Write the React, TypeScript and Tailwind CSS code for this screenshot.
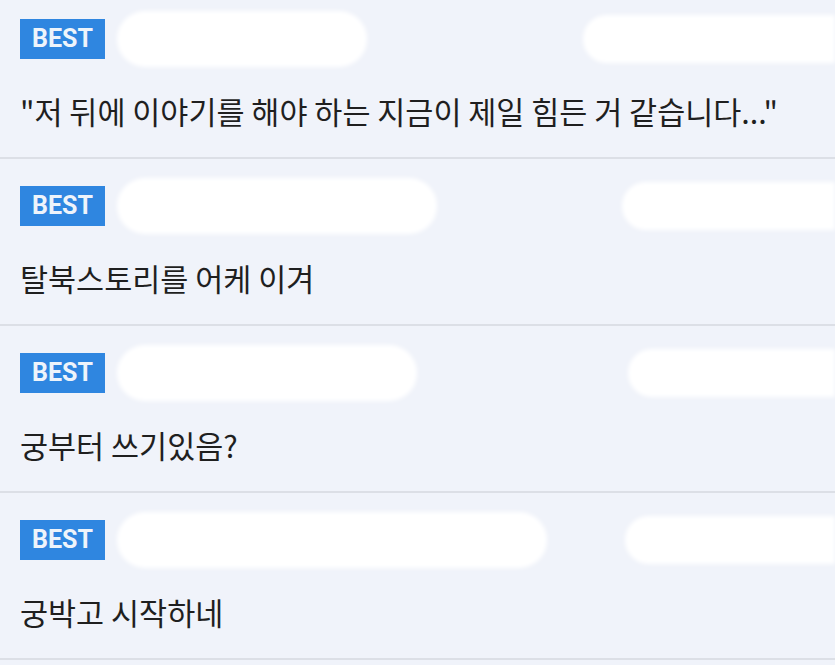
const comments = [
  {
    id: 1,
    text: '"저 뒤에 이야기를 해야 하는 지금이 제일 힘든 거 같습니다..."',
    nameWidth: 'w-[250px]',
    dateWidth: 'w-[252px]',
  },
  { id: 2, text: '탈북스토리를 어케 이겨', nameWidth: 'w-[320px]', dateWidth: 'w-[213px]' },
  { id: 3, text: '궁부터 쓰기있음?', nameWidth: 'w-[300px]', dateWidth: 'w-[207px]' },
  { id: 4, text: '궁박고 시작하네', nameWidth: 'w-[430px]', dateWidth: 'w-[210px]' },
]

export default function App() {
  return (
    <div className="h-[665px] w-[835px] overflow-hidden bg-[#f0f3fa] font-['Noto_Sans_CJK_KR',sans-serif]">
      <div className="-mt-[8px] flex flex-col">
        {comments.map((c) => (
          <div key={c.id} className="flex h-[167px] flex-col border-b-2 border-[#dcdfe6] pt-[27px] pl-[20px]">
            <div className="flex h-[40px] items-center">
              <span className="flex h-[40px] w-[85px] items-center justify-center bg-[#2f86e0] font-['Roboto',sans-serif] text-[25px] font-bold text-[#eef4fb]">
                BEST
              </span>
              {/* redacted name / date */}
              <div className={`ml-[12px] h-[56px] rounded-full bg-white blur-[2px] ${c.nameWidth}`} />
              <div className="flex-1" />
              <div className={`h-[48px] rounded-l-full bg-white blur-[2px] ${c.dateWidth}`} />
            </div>
            <p className="mt-[32px] text-[30.5px] leading-[40px] text-[#1f1f1f]">{c.text}</p>
          </div>
        ))}
      </div>
    </div>
  )
}
